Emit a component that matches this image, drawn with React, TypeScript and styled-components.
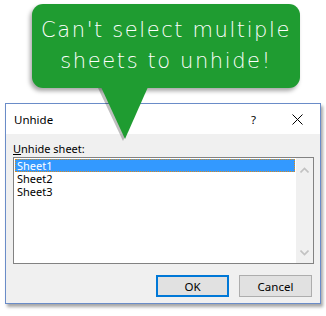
import React from "react";
import styled, { createGlobalStyle } from "styled-components";

const GlobalStyle = createGlobalStyle`
  html, body {
    margin: 0;
    padding: 0;
    background: #ffffff;
  }
  body {
    font-family: "Noto Sans", "Open Sans", sans-serif;
  }
`;

const Page = styled.div`
  position: relative;
  width: 326px;
  height: 316px;
  padding-top: 4px;
  box-sizing: border-box;
  overflow: hidden;
`;

const Callout = styled.div`
  position: relative;
  z-index: 2;
  margin-left: 32px;
  width: 268px;
  height: 84px;
  border-radius: 11px;
  background: #1f9c31;
  box-shadow: -2px 3px 4px rgba(0, 0, 0, 0.35);
  color: #ffffff;
  font-family: "DejaVu Sans", sans-serif;
  font-weight: 300;
  font-size: 21px;
  line-height: 31px;
  text-align: center;
  padding-top: 11px;
  box-sizing: border-box;
  letter-spacing: 1.6px;
`;

const Tail = styled.svg`
  position: absolute;
  left: 66px;
  top: 83px;
  overflow: visible;
`;

const Dialog = styled.div`
  margin: 15px 0 0 5px;
  width: 316px;
  height: 201px;
  box-sizing: border-box;
  border: 1px solid #6a8cc8;
  background: #f0f0f0;
  box-shadow: 2px 3px 3px rgba(0, 0, 0, 0.35);
  display: flex;
  flex-direction: column;
  font-size: 11px;
  color: #000;
`;

const TitleBar = styled.div`
  height: 30px;
  background: #ffffff;
  display: flex;
  align-items: center;
  padding-left: 8px;
  font-size: 11.5px;
`;

const Title = styled.span`
  flex: 1;
`;

const Help = styled.span`
  width: 10px;
  margin-right: 31px;
`;

const CloseIcon = styled.svg`
  margin-right: 17px;
`;

const Body = styled.div`
  flex: 1;
  display: flex;
  flex-direction: column;
  padding: 8px 6px 0 7px;
`;

const Label = styled.div`
  line-height: 14px;
  margin-bottom: 1px;
`;

const Underlined = styled.span`
  text-decoration: underline;
`;

const ListBox = styled.div`
  display: flex;
  height: 107px;
  box-sizing: border-box;
  border: 1px solid #828282;
  background: #ffffff;
`;

const Items = styled.div`
  flex: 1;
  padding: 1px 1px 0 1px;
`;

const Item = styled.div<{ $selected?: boolean }>`
  height: 13px;
  line-height: 13px;
  padding-left: 2px;
  box-sizing: border-box;
  background: ${(p) => (p.$selected ? "#3399ff" : "transparent")};
  color: ${(p) => (p.$selected ? "#ffffff" : "#000000")};
  outline: ${(p) => (p.$selected ? "1px dotted #d98a1c" : "none")};
  outline-offset: -1px;
`;

const ScrollBar = styled.div`
  width: 17px;
  background: #f0f0f0;
  display: flex;
  flex-direction: column;
  justify-content: space-between;
  align-items: center;
  padding: 9px 0 7px;
`;

const Buttons = styled.div`
  display: flex;
  justify-content: flex-end;
  gap: 10px;
  margin-top: 11px;
  padding-right: 2px;
`;

const Button = styled.div<{ $primary?: boolean }>`
  width: 73px;
  height: 22px;
  box-sizing: border-box;
  display: flex;
  align-items: center;
  justify-content: center;
  background: #e1e1e1;
  font-size: 11.5px;
  border: ${(p) => (p.$primary ? "2px solid #0078d7" : "1px solid #adadad")};
`;

const Chevron = ({ up }: { up?: boolean }) => (
  <svg width="9" height="6" viewBox="0 0 9 6">
    <path
      d={up ? "M0.5 5.5 L4.5 1.5 L8.5 5.5" : "M0.5 0.5 L4.5 4.5 L8.5 0.5"}
      fill="none"
      stroke="#c2c2c2"
      strokeWidth="1.6"
    />
  </svg>
);

export default function App() {
  return (
    <Page>
      <GlobalStyle />
      <Callout>
        Can't select multiple
        <br />
        sheets to unhide!
        <Tail width="50" height="54" viewBox="0 0 50 54">
          <path d="M3 0 L50 0 L28 53 Z" fill="rgba(0,0,0,0.25)" transform="translate(-3 1)" />
          <path d="M3 0 L50 0 L27 52 Z" fill="#1f9c31" />
        </Tail>
      </Callout>
      <Dialog>
        <TitleBar>
          <Title>Unhide</Title>
          <Help>?</Help>
          <CloseIcon width="11" height="11" viewBox="0 0 11 11">
            <path d="M0.5 0.5 L10.5 10.5 M10.5 0.5 L0.5 10.5" stroke="#000" strokeWidth="1" />
          </CloseIcon>
        </TitleBar>
        <Body>
          <Label>
            <Underlined>U</Underlined>nhide sheet:
          </Label>
          <ListBox>
            <Items>
              <Item $selected>Sheet1</Item>
              <Item>Sheet2</Item>
              <Item>Sheet3</Item>
            </Items>
            <ScrollBar>
              <Chevron up />
              <Chevron />
            </ScrollBar>
          </ListBox>
          <Buttons>
            <Button $primary>OK</Button>
            <Button>Cancel</Button>
          </Buttons>
        </Body>
      </Dialog>
    </Page>
  );
}
